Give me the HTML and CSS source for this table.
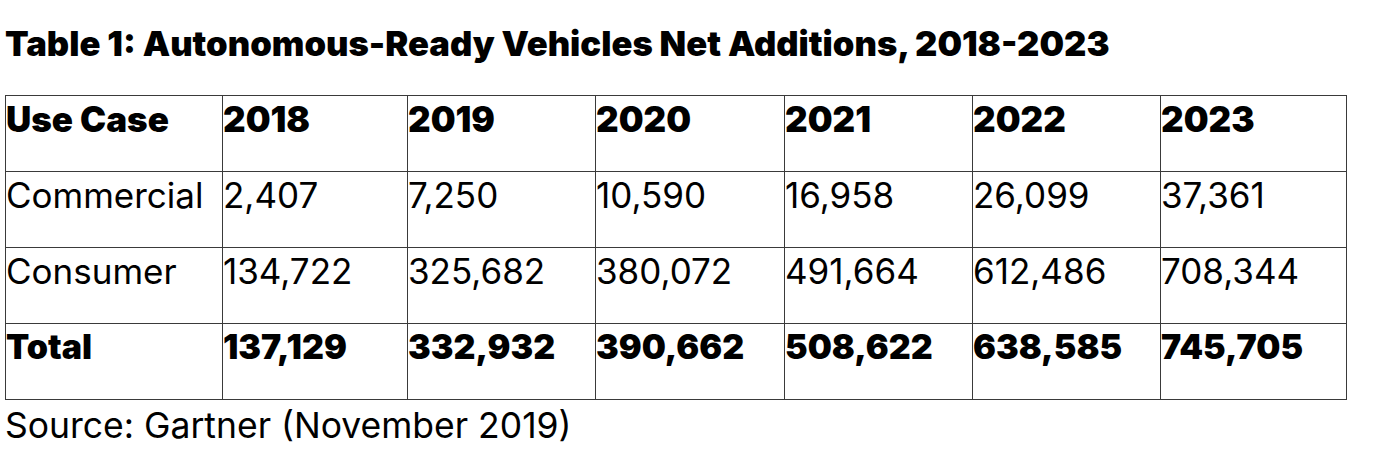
FILE: index.html
```html
<!DOCTYPE html>
<html lang="en">
<head>
<meta charset="utf-8">
<title>Table 1</title>
<link rel="stylesheet" href="styles.css">
</head>
<body>
<div class="page">
  <h1 class="title">Table 1: Autonomous-Ready Vehicles Net Additions, 2018-2023</h1>
  <table class="data">
    <colgroup>
      <col class="c0"><col class="c1"><col class="c2"><col class="c3"><col class="c4"><col class="c5"><col class="c6">
    </colgroup>
    <thead>
      <tr class="head">
        <th>Use Case</th><th>2018</th><th>2019</th><th>2020</th><th>2021</th><th>2022</th><th>2023</th>
      </tr>
    </thead>
    <tbody>
      <tr>
        <td>Commercial</td><td>2,407</td><td>7,250</td><td>10,590</td><td>16,958</td><td>26,099</td><td>37,361</td>
      </tr>
      <tr>
        <td>Consumer</td><td>134,722</td><td>325,682</td><td>380,072</td><td>491,664</td><td>612,486</td><td>708,344</td>
      </tr>
      <tr class="total">
        <td>Total</td><td>137,129</td><td>332,932</td><td>390,662</td><td>508,622</td><td>638,585</td><td>745,705</td>
      </tr>
    </tbody>
  </table>
  <p class="source">Source: Gartner (November 2019)</p>
</div>
</body>
</html>
```
FILE: styles.css
```css
html, body {
  margin: 0;
  padding: 0;
  background: #ffffff;
}
body {
  font-family: Inter, "Liberation Sans", sans-serif;
  color: #000;
}
.page {
  padding: 0 0 0 5px;
}
.title {
  margin: 0;
  padding-top: 23px;
  font-size: 34.6px;
  line-height: 40px;
  font-weight: 900;
  letter-spacing: 0;
}
.data {
  margin-top: 32px;
  border-collapse: collapse;
  table-layout: fixed;
  width: 1342px;
}
.c0 { width: 217px; }
.c1 { width: 185px; }
.c2 { width: 188px; }
.c3 { width: 189px; }
.c4 { width: 188px; }
.c5 { width: 188px; }
.c6 { width: 186px; }
.data th,
.data td {
  border: 1.5px solid #3a3a3a;
  height: 76px;
  box-sizing: border-box;
  padding: 3px 0 0 0;
  vertical-align: top;
  text-align: left;
  font-size: 35px;
  line-height: 40px;
  font-weight: 400;
  white-space: nowrap;
}
.data th {
  font-weight: 900;
  font-size: 35px;
}
.data .total td {
  font-weight: 900;
  font-size: 34px;
}
.source {
  margin: 5px 0 0 0;
  font-size: 35.5px;
  line-height: 42px;
}
```
